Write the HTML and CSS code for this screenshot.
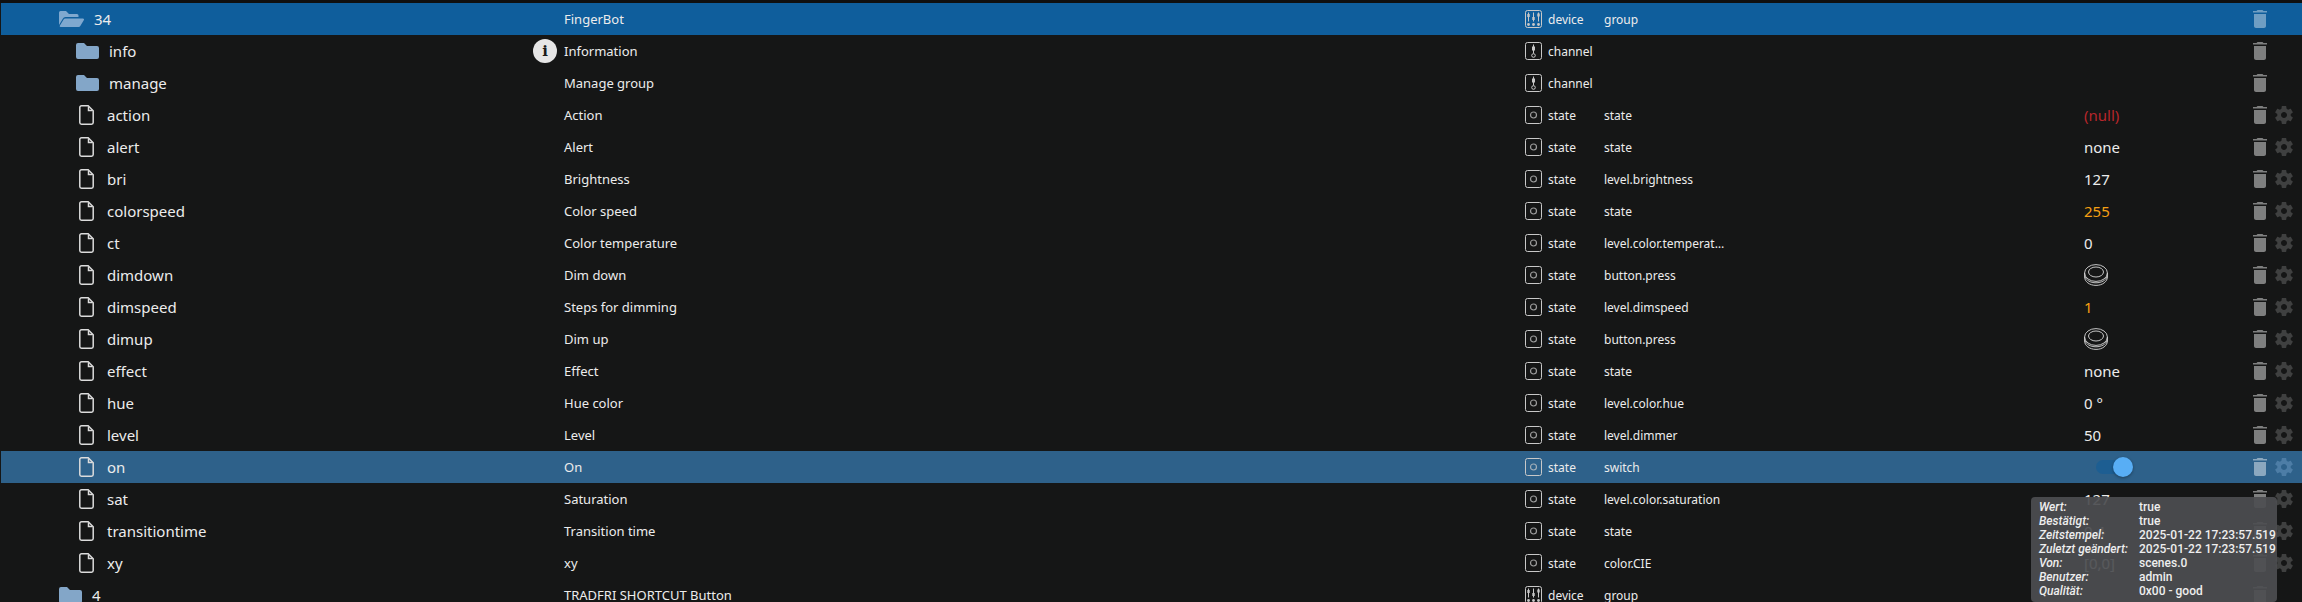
FILE: index.html
```html
<!DOCTYPE html>
<html lang="de">
<head>
<meta charset="utf-8">
<title>Objects</title>
<link rel="stylesheet" href="styles.css">
</head>
<body>
<svg class="defs" width="0" height="0" aria-hidden="true">
  <symbol id="folder" viewBox="0 0 23 16"><path d="M2 0h6l3 3h10a2 2 0 0 1 2 2v9a2 2 0 0 1-2 2H2a2 2 0 0 1-2-2V2a2 2 0 0 1 2-2z"/></symbol>
  <symbol id="folder-open" viewBox="0 0 25 16"><path d="M1.5 0h5.5l3 3h8a1.500 1.500 0 0 1 1.500 1.500V6H6.500a3 3 0 0 0-2.700 1.700L0 14V1.500A1.500 1.500 0 0 1 1.500 0z"/><path d="M6.300 7.500H24a1 1 0 0 1 .9 1.500l-3.600 6a2 2 0 0 1-1.700 1H1.500a.8.8 0 0 1-.7-1.200l3.800-6.300a2 2 0 0 1 1.700-1z"/></symbol>
  <symbol id="file" viewBox="0 0 15 20"><path d="M2.500.8h6.700l5 5v11.700a1.700 1.700 0 0 1-1.700 1.700H2.500a1.700 1.700 0 0 1-1.700-1.700V2.500A1.700 1.700 0 0 1 2.500.8z" fill="none" stroke="currentColor" stroke-width="1.500"/><path d="M9.500 1.500v4h4" fill="none" stroke="currentColor" stroke-width="1.500"/></symbol>
  <symbol id="t-state" viewBox="0 0 17 18"><rect x=".5" y=".5" width="16" height="17" rx="2" fill="none" stroke="currentColor"/><circle cx="8.500" cy="9" r="3" fill="none" stroke="currentColor" stroke-opacity=".75" stroke-width="1.200"/></symbol>
  <symbol id="t-channel" viewBox="0 0 17 18"><rect x=".5" y=".5" width="16" height="17" rx="2" fill="none" stroke="currentColor"/><path d="M8.500 2.500v9" stroke="currentColor"/><rect x="7" y="4.500" width="3" height="4" fill="currentColor"/><circle cx="8.500" cy="13.500" r="1.800" fill="none" stroke="currentColor"/></symbol>
  <symbol id="t-device" viewBox="0 0 17 18"><rect x=".5" y=".5" width="16" height="17" rx="2" fill="none" stroke="currentColor"/><path d="M3.500 2.500v9M8.500 2.500v9M13.500 2.500v9" stroke="currentColor"/><rect x="2.300" y="4" width="2.400" height="3" fill="currentColor"/><rect x="7.300" y="7" width="2.400" height="3" fill="currentColor"/><rect x="12.300" y="3.500" width="2.400" height="3" fill="currentColor"/><circle cx="3.500" cy="14.500" r="1.400" fill="currentColor"/><circle cx="8.500" cy="14.500" r="1.400" fill="currentColor"/><circle cx="13.500" cy="14.500" r="1.400" fill="currentColor"/></symbol>
  <symbol id="trash" viewBox="5 3 14 18"><path d="M6 19c0 1.100.9 2 2 2h8c1.100 0 2-.9 2-2V7H6v12zM19 4h-3.500l-1-1h-5l-1 1H5v1.500h14V4z"/></symbol>
  <symbol id="gear" viewBox="2.400 2.200 19.200 19.600"><path d="M19.140,12.940c0.040-0.300,0.060-0.610,0.060-0.940c0-0.320-0.020-0.640-0.070-0.940l2.030-1.580c0.180-0.140,0.230-0.410,0.120-0.610l-1.920-3.320c-0.120-0.220-0.370-0.290-0.590-0.220l-2.390,0.960c-0.500-0.380-1.030-0.700-1.620-0.940L14.400,2.810c-0.040-0.240-0.240-0.410-0.480-0.410h-3.840c-0.240,0-0.430,0.170-0.470,0.410L9.250,5.350C8.660,5.590,8.120,5.920,7.630,6.290L5.240,5.330c-0.220-0.080-0.470,0-0.590,0.220L2.740,8.870C2.620,9.080,2.660,9.340,2.860,9.480l2.030,1.580C4.840,11.360,4.800,11.690,4.800,12s0.020,0.640,0.070,0.940l-2.030,1.580c-0.180,0.140-0.230,0.410-0.120,0.610l1.920,3.320c0.120,0.220,0.370,0.290,0.590,0.220l2.390-0.960c0.500,0.380,1.030,0.700,1.620,0.940l0.360,2.540c0.050,0.240,0.240,0.410,0.480,0.410h3.840c0.240,0,0.440-0.170,0.470-0.410l0.360-2.540c0.590-0.240,1.130-0.560,1.620-0.940l2.390,0.960c0.220,0.080,0.470,0,0.590-0.220l1.920-3.320c0.120-0.220,0.070-0.470-0.120-0.610L19.140,12.940z M12,15.200c-1.770,0-3.200-1.430-3.200-3.200s1.430-3.200,3.200-3.200s3.200,1.430,3.200,3.200S13.770,15.200,12,15.200z"/></symbol>
  <symbol id="push" viewBox="0 0 24 22" fill="none" stroke="currentColor"><ellipse cx="12" cy="9" rx="11.400" ry="8.400" stroke-width=".9"/><ellipse cx="12" cy="8" rx="7.500" ry="5" stroke-width=".9"/><path d="M.6 9v4c0 4.600 5 8.400 11.400 8.400S23.400 17.600 23.400 13V9" stroke-width=".9"/><path d="M1 12.500c1 3.800 5.500 6.300 11 6.300s10-2.500 11-6.300" stroke-width=".9"/></symbol>
</svg>

<main class="tree">
  <div class="row row-selected">
    <div class="cell-name lvl-group"><svg class="ic-folder-open"><use href="#folder-open"/></svg><span>34</span></div>
    <div class="cell-desc">FingerBot</div>
    <div class="cell-type"><svg class="ic-type"><use href="#t-device"/></svg><span>device</span></div>
    <div class="cell-role"><span>group</span></div>
    <div class="cell-value"></div>
    <div class="cell-actions"><svg class="ic-trash"><use href="#trash"/></svg></div>
  </div>
  <div class="row">
    <div class="cell-name lvl-folder"><svg class="ic-folder"><use href="#folder"/></svg><span>info</span><span class="info-badge">i</span></div>
    <div class="cell-desc">Information</div>
    <div class="cell-type"><svg class="ic-type"><use href="#t-channel"/></svg><span>channel</span></div>
    <div class="cell-role"></div>
    <div class="cell-value"></div>
    <div class="cell-actions"><svg class="ic-trash"><use href="#trash"/></svg></div>
  </div>
  <div class="row">
    <div class="cell-name lvl-folder"><svg class="ic-folder"><use href="#folder"/></svg><span>manage</span></div>
    <div class="cell-desc">Manage group</div>
    <div class="cell-type"><svg class="ic-type"><use href="#t-channel"/></svg><span>channel</span></div>
    <div class="cell-role"></div>
    <div class="cell-value"></div>
    <div class="cell-actions"><svg class="ic-trash"><use href="#trash"/></svg></div>
  </div>
  <div class="row">
    <div class="cell-name lvl-file"><svg class="ic-file"><use href="#file"/></svg><span>action</span></div>
    <div class="cell-desc">Action</div>
    <div class="cell-type"><svg class="ic-type"><use href="#t-state"/></svg><span>state</span></div>
    <div class="cell-role"><span>state</span></div>
    <div class="cell-value val-null">(null)</div>
    <div class="cell-actions"><svg class="ic-trash"><use href="#trash"/></svg><svg class="ic-gear"><use href="#gear"/></svg></div>
  </div>
  <div class="row">
    <div class="cell-name lvl-file"><svg class="ic-file"><use href="#file"/></svg><span>alert</span></div>
    <div class="cell-desc">Alert</div>
    <div class="cell-type"><svg class="ic-type"><use href="#t-state"/></svg><span>state</span></div>
    <div class="cell-role"><span>state</span></div>
    <div class="cell-value">none</div>
    <div class="cell-actions"><svg class="ic-trash"><use href="#trash"/></svg><svg class="ic-gear"><use href="#gear"/></svg></div>
  </div>
  <div class="row">
    <div class="cell-name lvl-file"><svg class="ic-file"><use href="#file"/></svg><span>bri</span></div>
    <div class="cell-desc">Brightness</div>
    <div class="cell-type"><svg class="ic-type"><use href="#t-state"/></svg><span>state</span></div>
    <div class="cell-role"><span>level.brightness</span></div>
    <div class="cell-value">127</div>
    <div class="cell-actions"><svg class="ic-trash"><use href="#trash"/></svg><svg class="ic-gear"><use href="#gear"/></svg></div>
  </div>
  <div class="row">
    <div class="cell-name lvl-file"><svg class="ic-file"><use href="#file"/></svg><span>colorspeed</span></div>
    <div class="cell-desc">Color speed</div>
    <div class="cell-type"><svg class="ic-type"><use href="#t-state"/></svg><span>state</span></div>
    <div class="cell-role"><span>state</span></div>
    <div class="cell-value val-warn">255</div>
    <div class="cell-actions"><svg class="ic-trash"><use href="#trash"/></svg><svg class="ic-gear"><use href="#gear"/></svg></div>
  </div>
  <div class="row">
    <div class="cell-name lvl-file"><svg class="ic-file"><use href="#file"/></svg><span>ct</span></div>
    <div class="cell-desc">Color temperature</div>
    <div class="cell-type"><svg class="ic-type"><use href="#t-state"/></svg><span>state</span></div>
    <div class="cell-role"><span>level.color.temperature</span></div>
    <div class="cell-value">0</div>
    <div class="cell-actions"><svg class="ic-trash"><use href="#trash"/></svg><svg class="ic-gear"><use href="#gear"/></svg></div>
  </div>
  <div class="row">
    <div class="cell-name lvl-file"><svg class="ic-file"><use href="#file"/></svg><span>dimdown</span></div>
    <div class="cell-desc">Dim down</div>
    <div class="cell-type"><svg class="ic-type"><use href="#t-state"/></svg><span>state</span></div>
    <div class="cell-role"><span>button.press</span></div>
    <div class="cell-value"><svg class="ic-push"><use href="#push"/></svg></div>
    <div class="cell-actions"><svg class="ic-trash"><use href="#trash"/></svg><svg class="ic-gear"><use href="#gear"/></svg></div>
  </div>
  <div class="row">
    <div class="cell-name lvl-file"><svg class="ic-file"><use href="#file"/></svg><span>dimspeed</span></div>
    <div class="cell-desc">Steps for dimming</div>
    <div class="cell-type"><svg class="ic-type"><use href="#t-state"/></svg><span>state</span></div>
    <div class="cell-role"><span>level.dimspeed</span></div>
    <div class="cell-value val-warn">1</div>
    <div class="cell-actions"><svg class="ic-trash"><use href="#trash"/></svg><svg class="ic-gear"><use href="#gear"/></svg></div>
  </div>
  <div class="row">
    <div class="cell-name lvl-file"><svg class="ic-file"><use href="#file"/></svg><span>dimup</span></div>
    <div class="cell-desc">Dim up</div>
    <div class="cell-type"><svg class="ic-type"><use href="#t-state"/></svg><span>state</span></div>
    <div class="cell-role"><span>button.press</span></div>
    <div class="cell-value"><svg class="ic-push"><use href="#push"/></svg></div>
    <div class="cell-actions"><svg class="ic-trash"><use href="#trash"/></svg><svg class="ic-gear"><use href="#gear"/></svg></div>
  </div>
  <div class="row">
    <div class="cell-name lvl-file"><svg class="ic-file"><use href="#file"/></svg><span>effect</span></div>
    <div class="cell-desc">Effect</div>
    <div class="cell-type"><svg class="ic-type"><use href="#t-state"/></svg><span>state</span></div>
    <div class="cell-role"><span>state</span></div>
    <div class="cell-value">none</div>
    <div class="cell-actions"><svg class="ic-trash"><use href="#trash"/></svg><svg class="ic-gear"><use href="#gear"/></svg></div>
  </div>
  <div class="row">
    <div class="cell-name lvl-file"><svg class="ic-file"><use href="#file"/></svg><span>hue</span></div>
    <div class="cell-desc">Hue color</div>
    <div class="cell-type"><svg class="ic-type"><use href="#t-state"/></svg><span>state</span></div>
    <div class="cell-role"><span>level.color.hue</span></div>
    <div class="cell-value">0 °</div>
    <div class="cell-actions"><svg class="ic-trash"><use href="#trash"/></svg><svg class="ic-gear"><use href="#gear"/></svg></div>
  </div>
  <div class="row">
    <div class="cell-name lvl-file"><svg class="ic-file"><use href="#file"/></svg><span>level</span></div>
    <div class="cell-desc">Level</div>
    <div class="cell-type"><svg class="ic-type"><use href="#t-state"/></svg><span>state</span></div>
    <div class="cell-role"><span>level.dimmer</span></div>
    <div class="cell-value">50</div>
    <div class="cell-actions"><svg class="ic-trash"><use href="#trash"/></svg><svg class="ic-gear"><use href="#gear"/></svg></div>
  </div>
  <div class="row row-hover">
    <div class="cell-name lvl-file"><svg class="ic-file"><use href="#file"/></svg><span>on</span></div>
    <div class="cell-desc">On</div>
    <div class="cell-type"><svg class="ic-type"><use href="#t-state"/></svg><span>state</span></div>
    <div class="cell-role"><span>switch</span></div>
    <div class="cell-value"><span class="switch"><span class="switch-thumb"></span></span></div>
    <div class="cell-actions"><svg class="ic-trash"><use href="#trash"/></svg><svg class="ic-gear"><use href="#gear"/></svg></div>
  </div>
  <div class="row">
    <div class="cell-name lvl-file"><svg class="ic-file"><use href="#file"/></svg><span>sat</span></div>
    <div class="cell-desc">Saturation</div>
    <div class="cell-type"><svg class="ic-type"><use href="#t-state"/></svg><span>state</span></div>
    <div class="cell-role"><span>level.color.saturation</span></div>
    <div class="cell-value">127</div>
    <div class="cell-actions"><svg class="ic-trash"><use href="#trash"/></svg><svg class="ic-gear"><use href="#gear"/></svg></div>
  </div>
  <div class="row">
    <div class="cell-name lvl-file"><svg class="ic-file"><use href="#file"/></svg><span>transitiontime</span></div>
    <div class="cell-desc">Transition time</div>
    <div class="cell-type"><svg class="ic-type"><use href="#t-state"/></svg><span>state</span></div>
    <div class="cell-role"><span>state</span></div>
    <div class="cell-value">0.4</div>
    <div class="cell-actions"><svg class="ic-trash"><use href="#trash"/></svg><svg class="ic-gear"><use href="#gear"/></svg></div>
  </div>
  <div class="row">
    <div class="cell-name lvl-file"><svg class="ic-file"><use href="#file"/></svg><span>xy</span></div>
    <div class="cell-desc">xy</div>
    <div class="cell-type"><svg class="ic-type"><use href="#t-state"/></svg><span>state</span></div>
    <div class="cell-role"><span>color.CIE</span></div>
    <div class="cell-value">[0,0]</div>
    <div class="cell-actions"><svg class="ic-trash"><use href="#trash"/></svg><svg class="ic-gear"><use href="#gear"/></svg></div>
  </div>
  <div class="row">
    <div class="cell-name lvl-group"><svg class="ic-folder"><use href="#folder"/></svg><span>4</span></div>
    <div class="cell-desc">TRADFRI SHORTCUT Button</div>
    <div class="cell-type"><svg class="ic-type"><use href="#t-device"/></svg><span>device</span></div>
    <div class="cell-role"><span>group</span></div>
    <div class="cell-value"></div>
    <div class="cell-actions"><svg class="ic-trash"><use href="#trash"/></svg></div>
  </div>
</main>

<aside class="tooltip">
  <span class="tip-label">Wert:</span><span>true</span>
  <span class="tip-label">Bestätigt:</span><span>true</span>
  <span class="tip-label">Zeitstempel:</span><span>2025-01-22 17:23:57.519</span>
  <span class="tip-label">Zuletzt geändert:</span><span>2025-01-22 17:23:57.519</span>
  <span class="tip-label">Von:</span><span>scenes.0</span>
  <span class="tip-label">Benutzer:</span><span>admin</span>
  <span class="tip-label">Qualität:</span><span>0x00 - good</span>
</aside>
</body>
</html>
```

FILE: styles.css
```css
* { box-sizing: border-box; }

html, body {
  margin: 0;
  height: 602px;
  overflow: hidden;
  background: #151616;
}

body {
  position: relative;
  color: #ececec;
  font-family: "Noto Sans", "Open Sans", sans-serif;
}

.defs { position: absolute; }

.tree {
  padding: 3px 0 0 1px;
  background: linear-gradient(#101010 3px, #151616 3px);
}

.row {
  display: grid;
  grid-template-columns: 563px 961px 79px 480px 169px 1fr;
  align-items: center;
  height: 32px;
}

.row-selected { background: #0f5e9c; }
.row-hover { background: #2e618a; }

.cell-name {
  display: flex;
  align-items: center;
  height: 32px;
  font-size: 15px;
}

.lvl-group { padding-left: 58px; gap: 10px; }
.lvl-folder { padding-left: 75px; gap: 10px; }
.lvl-file { padding-left: 78px; gap: 13px; }

.ic-folder-open { width: 25px; height: 16px; flex: none; fill: #7fa8cf; }
.ic-folder { width: 23px; height: 16px; flex: none; fill: #83a6c8; }
.ic-file { width: 15px; height: 20px; flex: none; color: #dcdcdc; }

.info-badge {
  display: flex;
  align-items: center;
  justify-content: center;
  width: 24px;
  height: 24px;
  margin-left: auto;
  margin-right: 7px;
  border-radius: 50%;
  background: #e6e6e6;
  color: #1a1a1a;
  font: 700 15px "DejaVu Serif", serif;
}

.cell-desc {
  font-size: 13px;
  white-space: nowrap;
}

.cell-type {
  display: flex;
  align-items: center;
  gap: 6px;
  font-size: 12px;
}

.ic-type { width: 17px; height: 18px; flex: none; color: #c8c8c8; }

.cell-role { font-size: 12px; }

.cell-role span {
  display: block;
  max-width: 124px;
  overflow: hidden;
  text-overflow: ellipsis;
  white-space: nowrap;
}

.cell-value {
  display: flex;
  align-items: center;
  height: 32px;
  font-size: 15px;
}

.val-null { color: #b8262b; }
.val-warn { color: #f5a013; }

.ic-push { width: 24px; height: 22px; color: #d8d8d8; }

.switch {
  position: relative;
  display: block;
  width: 34px;
  height: 14px;
  margin-left: 12px;
  border-radius: 7px;
  background: #1d5e92;
}

.switch-thumb {
  position: absolute;
  top: -3px;
  right: -3px;
  width: 20px;
  height: 20px;
  border-radius: 50%;
  background: #58aef5;
  box-shadow: 0 1px 3px rgba(0, 0, 0, .35);
}

.cell-actions {
  display: flex;
  align-items: center;
  gap: 8px;
}

.ic-trash { width: 14px; height: 18px; flex: none; fill: rgba(255, 255, 255, .45); }
.ic-gear { width: 18px; height: 20px; flex: none; fill: rgba(255, 255, 255, .18); }
.row-selected .ic-trash { fill: rgba(255, 255, 255, .4); }
.row-hover .ic-gear { fill: #4d7da6; }

.tooltip {
  position: absolute;
  left: 2031px;
  top: 497px;
  width: 246px;
  height: 105px;
  padding: 3px 0 0 8px;
  display: grid;
  grid-template-columns: 100px 1fr;
  grid-auto-rows: 14px;
  align-items: center;
  border-radius: 4px;
  background: rgba(76, 78, 81, .93);
  color: #eeeeee;
  font: 500 12px/14px Roboto, sans-serif;
}

.tip-label { font-style: italic; }
```
